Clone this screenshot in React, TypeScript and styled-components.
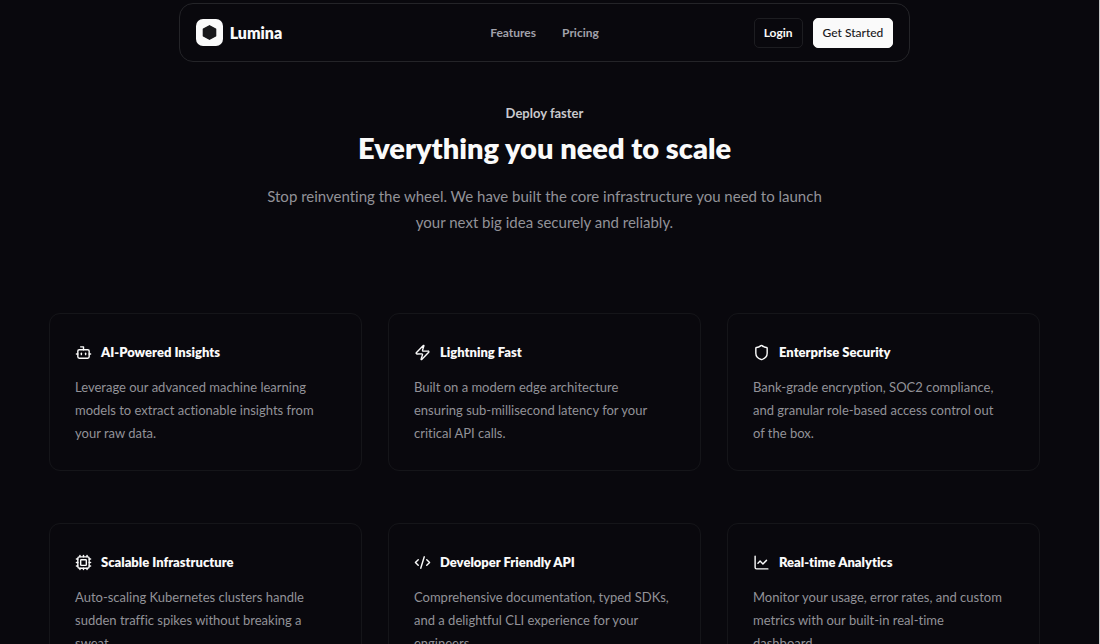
import React from "react";
import styled, { createGlobalStyle } from "styled-components";
import { Bot, Zap, Shield, Cpu, CodeXml, ChartLine, type LucideIcon } from "lucide-react";

const GlobalStyle = createGlobalStyle`
  * { box-sizing: border-box; }
  html { background: #09080d; scrollbar-width: none; }
  body {
    margin: 0;
    background: #09080d;
    color: #fafafa;
    font-family: Lato, "Open Sans", sans-serif;
    font-variant-ligatures: none;
  }
`;

const Page = styled.div`
  display: flex;
  flex-direction: column;
  align-items: center;
  min-height: 100vh;
  padding: 3px 10px 48px 0;
  border-right: 1px solid #c8c8c8;
`;

const Header = styled.header`
  display: grid;
  grid-template-columns: 1fr auto 1fr;
  align-items: center;
  width: calc(67% + 2px);
  max-width: 940px;
  height: 59px;
  padding: 0 16px;
  border: 1px solid #242428;
  border-radius: 14px;
`;

const Brand = styled.a`
  display: flex;
  align-items: center;
  gap: 7px;
  color: #fafafa;
  font-size: 16px;
  font-weight: 800;
  line-height: 24px;
  text-decoration: none;
`;

const Nav = styled.nav`
  display: flex;
  gap: 26px;
`;

const NavLink = styled.a`
  color: #a1a1aa;
  font-size: 12px;
  font-weight: 700;
  line-height: 18px;
  text-decoration: none;
`;

const Actions = styled.div`
  display: flex;
  justify-content: flex-end;
  gap: 10px;
`;

const Button = styled.button<{ $solid?: boolean }>`
  height: 30px;
  padding: 0 9px;
  border: 1px solid ${(p) => (p.$solid ? "#fafafa" : "#1d1d21")};
  border-radius: 5px;
  background: ${(p) => (p.$solid ? "#fafafa" : "transparent")};
  color: ${(p) => (p.$solid ? "#18181b" : "#fafafa")};
  font-family: inherit;
  font-size: 12px;
  font-weight: ${(p) => (p.$solid ? 500 : 700)};
  white-space: nowrap;
`;

const Intro = styled.section`
  display: flex;
  flex-direction: column;
  align-items: center;
  padding: 40px 24px 0;
  text-align: center;
`;

const Eyebrow = styled.p`
  margin: 0;
  color: #c9c9ce;
  font-size: 13px;
  font-weight: 700;
  line-height: 22px;
`;

const Title = styled.h2`
  margin: 4px 0 0;
  font-size: 29px;
  font-weight: 800;
  line-height: 40px;
`;

const Lead = styled.p`
  max-width: 580px;
  margin: 15px 0 0;
  color: #929298;
  font-size: 15px;
  line-height: 26px;
`;

const Grid = styled.section`
  display: grid;
  grid-template-columns: repeat(3, 1fr);
  gap: 52px 26px;
  width: 91%;
  margin-top: 78px;
`;

const Card = styled.article`
  padding: 26px 25px 25px;
  border: 1px solid #151519;
  border-radius: 11px;
`;

const CardHead = styled.div`
  display: flex;
  align-items: center;
  gap: 9px;
  height: 24px;
`;

const CardTitle = styled.h3`
  margin: 0;
  font-size: 13px;
  font-weight: 800;
  line-height: 24px;
`;

const CardText = styled.p`
  margin: 12px 0 0;
  color: #929298;
  font-size: 13px;
  line-height: 23px;
  white-space: pre-line;
`;

const features: { icon: LucideIcon; title: string; text: string }[] = [
  { icon: Bot, title: "AI-Powered Insights", text: "Leverage our advanced machine learning\nmodels to extract actionable insights from\nyour raw data." },
  { icon: Zap, title: "Lightning Fast", text: "Built on a modern edge architecture\nensuring sub-millisecond latency for your\ncritical API calls." },
  { icon: Shield, title: "Enterprise Security", text: "Bank-grade encryption, SOC2 compliance,\nand granular role-based access control out\nof the box." },
  { icon: Cpu, title: "Scalable Infrastructure", text: "Auto-scaling Kubernetes clusters handle\nsudden traffic spikes without breaking a\nsweat." },
  { icon: CodeXml, title: "Developer Friendly API", text: "Comprehensive documentation, typed SDKs,\nand a delightful CLI experience for your\nengineers." },
  { icon: ChartLine, title: "Real-time Analytics", text: "Monitor your usage, error rates, and custom\nmetrics with our built-in real-time\ndashboard." },
];

const Logo = () => (
  <svg width="27" height="27" viewBox="0 0 27 27" aria-hidden="true">
    <rect width="27" height="27" rx="7" fill="#fafafa" />
    <path d="M13.5 6.8 19.6 10.1v6.8l-6.1 3.3-6.1-3.3v-6.8Z" fill="#18181b" stroke="#18181b" strokeWidth="1.4" strokeLinejoin="round" />
  </svg>
);

export default function App() {
  return (
    <>
      <GlobalStyle />
      <Page>
        <Header>
          <Brand href="#"><Logo />Lumina</Brand>
          <Nav>
            <NavLink href="#features">Features</NavLink>
            <NavLink href="#pricing">Pricing</NavLink>
          </Nav>
          <Actions>
            <Button type="button">Login</Button>
            <Button type="button" $solid>Get Started</Button>
          </Actions>
        </Header>
        <Intro id="features">
          <Eyebrow>Deploy faster</Eyebrow>
          <Title>Everything you need to scale</Title>
          <Lead>Stop reinventing the wheel. We have built the core infrastructure you need to launch your next big idea securely and reliably.</Lead>
        </Intro>
        <Grid>
          {features.map(({ icon: Icon, title, text }) => (
            <Card key={title}>
              <CardHead>
                <Icon size={17} strokeWidth={2} aria-hidden="true" />
                <CardTitle>{title}</CardTitle>
              </CardHead>
              <CardText>{text}</CardText>
            </Card>
          ))}
        </Grid>
      </Page>
    </>
  );
}
